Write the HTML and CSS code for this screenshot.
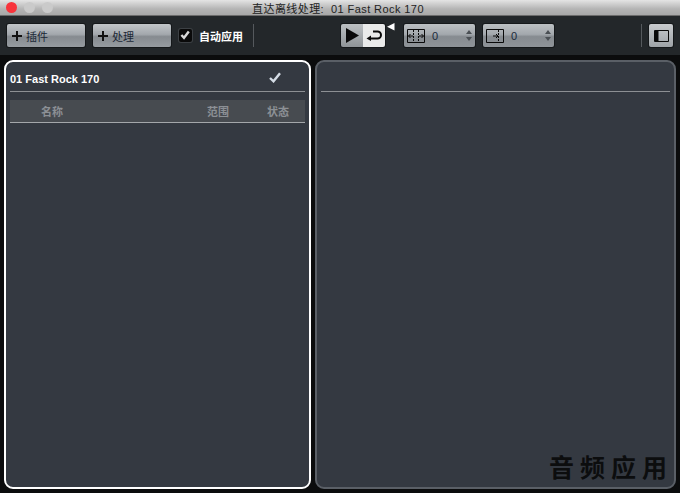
FILE: index.html
```html
<!DOCTYPE html>
<html lang="zh">
<head>
<meta charset="utf-8">
<title>直达离线处理</title>
<link rel="stylesheet" href="styles.css">
</head>
<body>
<div class="titlebar">
  <div class="lights"><span class="light red"></span><span class="light"></span><span class="light"></span></div>
  <div class="title">直达离线处理:&nbsp; 01 Fast Rock 170</div>
</div>
<div class="toolbar">
  <button class="btn add"><span class="plus"></span><span>插件</span></button>
  <button class="btn add second"><span class="plus"></span><span>处理</span></button>
  <span class="check"><svg width="12" height="12" viewBox="0 0 12 12"><path d="M2.4 6 5 8.800 9.800 2.600" fill="none" stroke="#d8d8d8" stroke-width="2.400"/></svg></span>
  <span class="auto">自动应用</span>
  <span class="sep"></span>
  <div class="transport">
    <span class="tbtn"><svg width="14" height="15" viewBox="0 0 14 15"><path d="M1 0 14 7.500 1 15Z" fill="#0a0a0a"/></svg></span>
    <span class="tbtn on"><svg width="16" height="12" viewBox="0 0 16 12"><path d="M7 1.500H11.500A3.200 3.200 0 0 1 11.500 8.500H3" fill="none" stroke="#0a0a0a" stroke-width="2"/><path d="M0.500 8.500 5 5.500V11Z" fill="#0a0a0a"/></svg></span>
  </div>
  <svg class="marker" width="8" height="8" viewBox="0 0 8 8"><path d="M7.500 0V7.500L0 3.700Z" fill="#fff"/></svg>
  <div class="spin first">
    <svg width="18" height="14" viewBox="0 0 18 14"><path d="M.5.500h17v13H.500z" fill="none" stroke="#0a0a0a"/><path d="M6.500 1v12M11.500 1v12" stroke="#0a0a0a" stroke-dasharray="2 1"/><path d="M1.500 7H6M3.500 5 1.500 7l2 2M16.500 7H12M14.500 5l2 2-2 2" fill="none" stroke="#0a0a0a"/></svg>
    <span class="val">0</span>
    <span class="arrows"><i class="up"></i><i class="down"></i></span>
  </div>
  <div class="spin">
    <svg width="18" height="14" viewBox="0 0 18 14"><path d="M.5.500h17v13H.500z" fill="none" stroke="#0a0a0a"/><path d="M12.500 1v12" stroke="#0a0a0a" stroke-dasharray="2 1"/><path d="M7 7h5M10 5l2 2-2 2" fill="none" stroke="#0a0a0a"/></svg>
    <span class="val">0</span>
    <span class="arrows"><i class="up"></i><i class="down"></i></span>
  </div>
  <span class="sep right"></span>
  <button class="btn panelbtn"><svg width="15" height="12" viewBox="0 0 15 12"><path d="M.5.500h14v11H.500z" fill="none" stroke="#0a0a0a"/><path d="M1 1h3.500v10H1z" fill="#0a0a0a"/></svg></button>
</div>
<div class="main">
  <section class="panel active">
    <div class="track"><span class="name">01 Fast Rock 170</span><svg class="tick" width="12" height="11" viewBox="0 0 12 11"><path d="M1 6 4.500 9.300 11 1.200" fill="none" stroke="#d5dde6" stroke-width="2.400"/></svg></div>
    <div class="head"><span class="c1">名称</span><span class="c2">范围</span><span class="c3">状态</span></div>
  </section>
  <section class="panel other">
    <div class="track blank"></div>
    <div class="mark">音频应用</div>
  </section>
</div>
</body>
</html>
```
FILE: styles.css
```css
* { box-sizing: border-box; }
html, body { margin: 0; height: 100%; }
body {
  width: 680px; height: 493px; overflow: hidden; background: #0b0c0d;
  font-family: "Liberation Sans", "Noto Sans CJK SC", sans-serif;
  display: flex; flex-direction: column;
}
.titlebar {
  height: 16px; flex: none; display: flex; align-items: center;
  background: linear-gradient(#e4e4e4, #b4b4b4 60%, #a8a8a8);
  border-bottom: 1px solid #6b6b6b;
}
.lights { width: 60px; flex: none; display: flex; gap: 7px; padding-left: 6px; }
.light { width: 11px; height: 11px; border-radius: 50%; background: #cacaca; }
.light.red { background: #f8343c; }
.title { flex: 1; padding-right: 64px; text-align: center; font-size: 11px; color: #222; letter-spacing: .42px; }
.toolbar {
  height: 39px; flex: none; display: flex; align-items: center; padding-left: 7px;
  background: #23272a;
}
.btn {
  height: 23px; border: 0; padding: 0; border-radius: 2px; font: inherit;
  background: linear-gradient(#c2c6c9, #a3a8ad 45%, #868b90 55%, #969ba0);
  box-shadow: 0 0 0 1px #15181a;
  display: flex; align-items: center;
}
.add { width: 78px; padding-left: 5px; font-size: 11px; color: #1c2836; gap: 4px; }
.second { margin-left: 8px; }
.plus {
  width: 10px; height: 10px; flex: none;
  background:
    linear-gradient(#111, #111) center / 10px 2px no-repeat,
    linear-gradient(#111, #111) center / 2px 10px no-repeat;
}
.check {
  width: 13px; height: 13px; margin-left: 8px; background: #0a0a0a; border-radius: 2px;
  box-shadow: 0 0 0 1px #3c4044; display: flex;
}
.auto { margin-left: 7px; width: 46px; font-size: 11px; font-weight: 700; color: #fff; white-space: nowrap; }
.sep { width: 1px; height: 23px; margin-left: 8px; background: #55595d; }
.transport {
  width: 44px; height: 23px; margin-left: 87px; display: flex; border-radius: 2px; overflow: hidden;
  box-shadow: 0 0 0 1px #15181a;
}
.tbtn { width: 22px; display: flex; align-items: center; justify-content: center;
  background: linear-gradient(#bcc0c3, #8f9498); }
.tbtn.on { background: #e9eaea; }
.marker { align-self: flex-start; margin: 7px 0 0 2px; }
.spin {
  width: 71px; height: 23px; margin-left: 8px; border-radius: 2px; display: flex; align-items: center;
  padding-left: 3px;
  background: linear-gradient(#bcc0c3, #a3a8ad 45%, #868b90 55%, #8f9499);
  box-shadow: 0 0 0 1px #15181a;
}
.spin.first { margin-left: 9px; }
.val { margin-left: 7px; font-size: 11px; color: #1a2a3c; }
.arrows { margin-left: auto; margin-right: 3px; display: flex; flex-direction: column; gap: 3px; }
.arrows i { display: block; width: 0; height: 0; border-left: 3px solid transparent; border-right: 3px solid transparent; }
.up { border-bottom: 4px solid #4a4f54; }
.down { border-top: 4px solid #4a4f54; }
.sep.right { margin-left: 87px; }
.panelbtn { width: 24px; margin-left: 7px; justify-content: center;
  background: linear-gradient(#c8cbce, #9ea3a7); }
.main { flex: 1; display: flex; gap: 4px; padding: 5px 4px 4px; }
.panel { background: #343941; border-radius: 9px; position: relative; }
.active { width: 307px; border: 2px solid #fff; padding: 0 4px; }
.other { flex: 1; border: 2px solid #5a5f66; padding: 0 4px; }
.track {
  height: 30px; border-bottom: 1px solid #8d9094; display: flex; align-items: center;
  padding-top: 5px; justify-content: space-between;
}
.name { font-size: 11px; font-weight: 700; color: #fff; }
.tick { margin-right: 24px; margin-top: -4px; }
.head {
  margin-top: 8px; height: 23px; display: flex; align-items: center; background: #474b50;
  border-bottom: 1px solid #a4a7aa; font-size: 11px; font-weight: 700; color: #8c9095;
}
.c1 { margin-left: 31px; }
.c2 { margin-left: 144px; }
.c3 { margin-left: 38px; }
.mark {
  position: absolute; right: 1px; bottom: 6px; font-size: 25px; line-height: 30px;
  letter-spacing: 6px; font-weight: 700; color: #0c0d0e;
  font-family: "Noto Sans CJK SC", sans-serif; white-space: nowrap;
}
```
